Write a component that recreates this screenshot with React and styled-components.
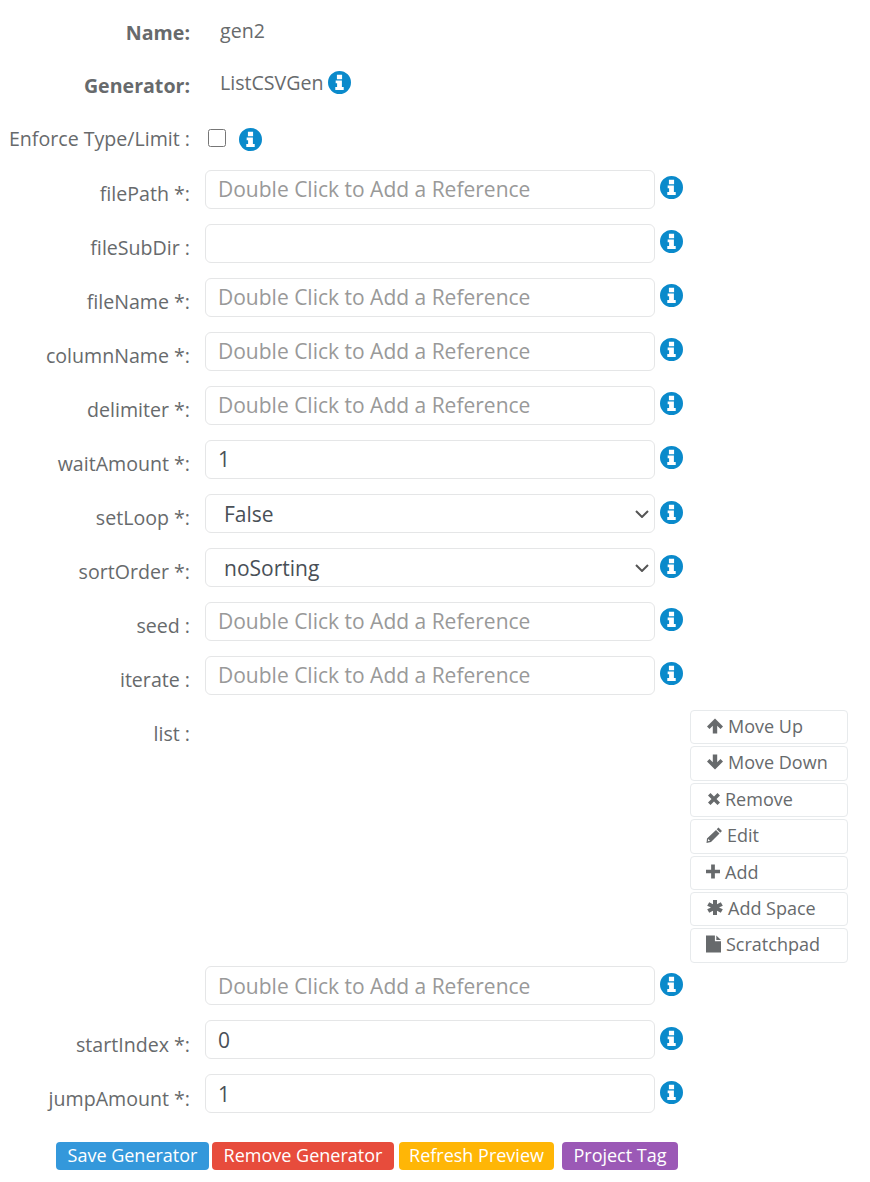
import React from 'react';
import styled, { createGlobalStyle } from 'styled-components';

const GlobalStyle = createGlobalStyle`
  html, body {
    margin: 0;
    padding: 0;
    background: #fff;
    font-family: "Open Sans", "Liberation Sans", sans-serif;
    color: #676a6c;
  }
`;

const CHEVRON =
  "data:image/svg+xml,%3Csvg xmlns='http://www.w3.org/2000/svg' viewBox='0 0 14 8'%3E%3Cpath d='M1 1l6 6 6-6' fill='none' stroke='%23555' stroke-width='2'/%3E%3C/svg%3E";

const Page = styled.div`
  width: 870px;
  height: 1182px;
  padding-top: 12px;
  box-sizing: border-box;
  overflow: hidden;
`;

const Row = styled.div`
  display: grid;
  grid-template-columns: 205px 450px auto;
  height: ${(p) => p.$height || 39}px;
  margin-bottom: ${(p) => p.$mb ?? 15}px;
`;

const Label = styled.label`
  font-size: 19.6px;
  line-height: 24px;
  text-align: right;
  white-space: nowrap;
  padding-right: 15px;
  padding-top: ${(p) => p.$top ?? 12}px;
  font-weight: ${(p) => (p.$bold ? 700 : 400)};
`;

const StaticValue = styled.div`
  display: flex;
  align-items: flex-start;
  gap: 4px;
  padding-left: 15px;
  font-size: 19.6px;
  line-height: 24px;
  padding-top: ${(p) => p.$top ?? 6}px;
`;

const Controls = styled.div`
  display: flex;
  align-items: flex-start;
  gap: 13px;
  padding-top: 8px;
  padding-left: 3px;
`;

const Check = styled.input`
  width: 18px;
  height: 18px;
  margin: 1px 0 0;
`;

const Field = styled.input`
  width: 450px;
  height: 39px;
  box-sizing: border-box;
  padding: ${(p) => (p.$low ? '6px 12px 6px' : '4px 12px 6px')};
  border: 1px solid #e5e6e7;
  border-radius: 6px;
  background: #fff;
  color: #495057;
  font-family: inherit;
  font-size: 21px;
  outline: none;
  &::placeholder {
    color: #999;
    opacity: 1;
  }
`;

const Select = styled.select`
  appearance: none;
  width: 450px;
  height: 39px;
  box-sizing: border-box;
  padding: 0 30px 0 18px;
  border: 1px solid #e5e6e7;
  border-radius: 6px;
  background: #fff url("${CHEVRON}") no-repeat right 5px center / 14px 8px;
  color: #495057;
  font-family: inherit;
  font-size: 21px;
  outline: none;
`;

const HelpCell = styled.div`
  padding-left: 5px;
  padding-top: ${(p) => p.$top ?? 6}px;
  line-height: 0;
`;

const InfoSvg = styled.svg`
  width: 23px;
  height: 23px;
  flex: none;
`;

const ListColumn = styled.div`
  display: flex;
  flex-direction: column;
  width: 158px;
  margin-left: 35px;
`;

const ToolButton = styled.button`
  display: flex;
  align-items: center;
  gap: 5px;
  width: 158px;
  height: 34.4px;
  margin-bottom: 2px;
  padding: 0 0 2.5px 15px;
  box-sizing: border-box;
  border: 1px solid #e7eaec;
  border-radius: 4px;
  background: #fff;
  color: #676a6c;
  font-family: inherit;
  font-size: 18px;
`;

const ToolIcon = styled.svg`
  width: ${(p) => p.$w}px;
  height: ${(p) => p.$h}px;
  margin-left: ${(p) => p.$ml || 0}px;
  flex: none;
  fill: currentColor;
`;

const Footer = styled.div`
  display: flex;
  padding-left: 56px;
  padding-top: 14px;
`;

const ActionButton = styled.button`
  height: 28px;
  width: ${(p) => p.$width}px;
  margin-right: ${(p) => p.$gap || 0}px;
  padding: 0 0 2px;
  border: none;
  border-radius: 4px;
  background: ${(p) => p.$color};
  color: #fff;
  font-family: inherit;
  font-size: 18px;
  line-height: 26px;
  white-space: nowrap;
`;

const Info = () => (
  <InfoSvg viewBox="0 0 24 24">
    <path
      fill="#0a8acb"
      fillRule="evenodd"
      d="M12 0a12 12 0 1 1 0 24a12 12 0 0 1 0-24zM9.300 4v4.500h5.400V4zM8 10v2.700h1.500v4H7.600v3h8.800v-3h-1.900V10z"
    />
  </InfoSvg>
);

const PLACEHOLDER = 'Double Click to Add a Reference';

const fields = [
  { label: 'filePath *:', placeholder: PLACEHOLDER },
  { label: 'fileSubDir :' },
  { label: 'fileName *:', placeholder: PLACEHOLDER },
  { label: 'columnName *:', placeholder: PLACEHOLDER },
  { label: 'delimiter *:', placeholder: PLACEHOLDER },
  { label: 'waitAmount *:', value: '1' },
  { label: 'setLoop *:', options: ['False', 'True'], helpTop: 7 },
  { label: 'sortOrder *:', options: ['noSorting', 'ascending', 'descending'], helpTop: 7 },
  { label: 'seed :', placeholder: PLACEHOLDER },
  { label: 'iterate :', placeholder: PLACEHOLDER },
];

const tools = [
  { name: 'Move Up', w: 16, h: 16, ml: 1, view: '0 0 16 16', d: 'M8 .5l8 8-2.500 2.500-3.300-3.200v7.700H5.800V7.800L2.500 11 0 8.500z' },
  { name: 'Move Down', w: 16, h: 16, ml: 1, view: '0 0 16 16', d: 'M8 15.500l8-8L13.500 5l-3.300 3.200V.5H5.800v7.700L2.500 5 0 7.500z' },
  { name: 'Remove', w: 12, h: 12, ml: 2, view: '0 0 12 12', d: 'M2.500 0L6 3.500 9.500 0 12 2.500 8.500 6 12 9.500 9.500 12 6 8.500 2.500 12 0 9.500 3.500 6 0 2.500z' },
  { name: 'Edit', w: 16, h: 16, view: '0 0 16 16', d: 'M12.500 .5L16 4l-1.800 1.800-3.500-3.500zM10 3l3.500 3.500L5 15 .5 16 1 11.500zM2.300 12l-.5 2.200 2.200-.5z' },
  { name: 'Add', w: 14, h: 15, view: '0 0 15 15', d: 'M5.500 0h4v5.500H15v4H9.500V15h-4V9.500H0v-4h5.500z' },
  { name: 'Add Space', w: 16, h: 15, ml: 1, view: '0 0 16 15', d: 'M6 0h4v4.300l3.800-2.100 2 3.500L12 7.500l3.800 1.800-2 3.500L10 10.700V15H6v-4.300l-3.800 2.100-2-3.500L4 7.500.2 5.700l2-3.500L6 4.300z' },
  { name: 'Scratchpad', w: 15, h: 18, view: '0 0 16 18', d: 'M0 0h9.500v6H16v12H0zM11 0l5 4.800h-5z' },
];

const FieldRow = ({ label, placeholder, value, options, helpTop, low }) => (
  <Row>
    <Label $top={low ? 13 : 12}>{label}</Label>
    {options ? (
      <Select defaultValue={options[0]}>
        {options.map((o) => (
          <option key={o}>{o}</option>
        ))}
      </Select>
    ) : (
      <Field placeholder={placeholder} defaultValue={value} $low={low} />
    )}
    <HelpCell $top={helpTop}>
      <Info />
    </HelpCell>
  </Row>
);

const App = () => (
  <Page>
    <GlobalStyle />
    <Row>
      <Label $bold $top={9}>Name:</Label>
      <StaticValue $top={7}>gen2</StaticValue>
    </Row>
    <Row>
      <Label $bold $top={8}>Generator:</Label>
      <StaticValue $top={5}>
        ListCSVGen <Info />
      </StaticValue>
    </Row>
    <Row $mb={11}>
      <Label $top={7}>Enforce Type/Limit :</Label>
      <Controls>
        <Check type="checkbox" />
        <Info />
      </Controls>
    </Row>
    {fields.map((f) => (
      <FieldRow key={f.label} {...f} />
    ))}
    <Row $height={252} $mb={4}>
      <Label>list :</Label>
      <div />
      <ListColumn>
        {tools.map(({ name, w, h, ml, view, d }) => (
          <ToolButton key={name}>
            <ToolIcon viewBox={view} $w={w} $h={h} $ml={ml}>
              <path fillRule="evenodd" d={d} />
            </ToolIcon>
            {name}
          </ToolButton>
        ))}
      </ListColumn>
    </Row>
    <FieldRow label="" placeholder={PLACEHOLDER} helpTop={7} low />
    <FieldRow label="startIndex *:" value="0" helpTop={7} low />
    <FieldRow label="jumpAmount *:" value="1" helpTop={7} low />
    <Footer>
      <ActionButton $color="#3498db" $width={153} $gap={3}>Save Generator</ActionButton>
      <ActionButton $color="#e74c3c" $width={182} $gap={5}>Remove Generator</ActionButton>
      <ActionButton $color="#ffb606" $width={155} $gap={8}>Refresh Preview</ActionButton>
      <ActionButton $color="#9b59b6" $width={116}>Project Tag</ActionButton>
    </Footer>
  </Page>
);

export default App;
